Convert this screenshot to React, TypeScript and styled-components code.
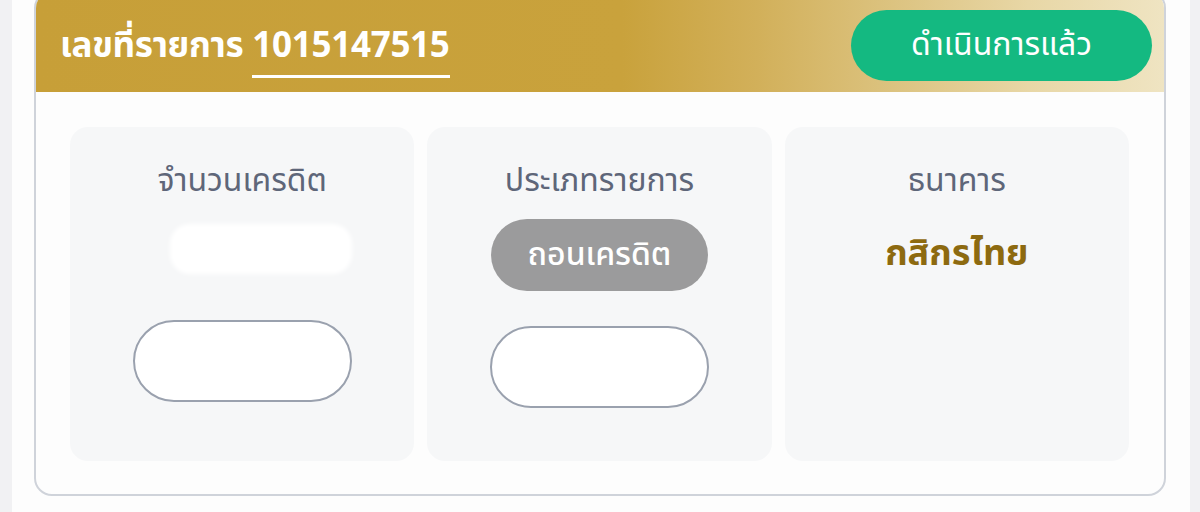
import styled, { createGlobalStyle } from 'styled-components';

const GlobalStyle = createGlobalStyle`
  html, body {
    margin: 0;
    padding: 0;
    background: #f1f1f3;
    font-family: 'Noto Sans Thai', 'Noto Sans', 'Liberation Sans', sans-serif;
  }
`;

const Page = styled.div`
  width: 1200px;
  height: 512px;
  overflow: hidden;
  display: flex;
`;

const Sheet = styled.div`
  margin-left: 12px;
  width: 1178px;
  height: 100%;
  background: #fdfdfd;
  padding: 0 24px 0 22px;
  box-sizing: border-box;
`;

const Card = styled.div`
  margin-top: -10px;
  border: 2px solid #cfd3da;
  border-radius: 18px;
  overflow: hidden;
  background: #fdfdfd;
`;

const Header = styled.div`
  height: 94px;
  padding: 6px 12px 0 24px;
  display: flex;
  align-items: center;
  justify-content: space-between;
  background: linear-gradient(
    90deg,
    #c79f38 0%,
    #c9a23c 52%,
    #d2b05a 64%,
    #dcc380 76%,
    #e8d7a6 88%,
    #efe4c2 100%
  );
`;

const Title = styled.h1`
  margin: 0;
  padding-top: 8px;
  color: #fff;
  font-size: 35px;
  font-weight: 700;
  letter-spacing: -0.3px;
  display: flex;
  align-items: flex-start;
  gap: 9px;
`;

const OrderNo = styled.span`
  padding-bottom: 2px;
  border-bottom: 3px solid #fff;
`;

const StatusPill = styled.div`
  width: 301px;
  height: 71px;
  border-radius: 36px;
  background: #14b981;
  color: #fff;
  font-size: 32px;
  display: flex;
  align-items: center;
  justify-content: center;
`;

const Body = styled.div`
  padding: 35px 35px 33px 34px;
  display: grid;
  grid-template-columns: repeat(3, 1fr);
  gap: 13px;
`;

const Panel = styled.div`
  height: 334px;
  border-radius: 18px;
  background: #f6f7f8;
  display: flex;
  flex-direction: column;
  align-items: center;
  padding-top: 34px;
  box-sizing: border-box;
`;

const Label = styled.div`
  color: #5e6679;
  font-size: 32px;
  line-height: 40px;
`;

const Blur = styled.div<{ $w: number; $h: number; $mt: number; $dx: number }>`
  width: ${(p) => p.$w}px;
  height: ${(p) => p.$h}px;
  margin-top: ${(p) => p.$mt}px;
  margin-left: ${(p) => p.$dx}px;
  background: #fff;
  border-radius: 20px;
  filter: blur(2px);
`;

const TypeTag = styled.div`
  margin-top: 18px;
  width: 217px;
  height: 72px;
  border-radius: 36px;
  background: #9b9b9c;
  color: #fff;
  font-size: 32px;
  font-weight: 500;
  display: flex;
  align-items: center;
  justify-content: center;
`;

const OutlinePill = styled.div<{ $mt: number }>`
  margin-top: ${(p) => p.$mt}px;
  width: 219px;
  height: 82px;
  border-radius: 41px;
  border: 2px solid #9aa1ae;
  background: #fff;
  box-sizing: border-box;
`;

const Bank = styled.div`
  margin-top: 26px;
  color: #8d6a10;
  font-size: 36px;
  font-weight: 700;
`;

export default function App() {
  return (
    <Page>
      <GlobalStyle />
      <Sheet>
        <Card>
          <Header>
            <Title>
              <span>เลขที่รายการ</span>
              <OrderNo>1015147515</OrderNo>
            </Title>
            <StatusPill>ดำเนินการแล้ว</StatusPill>
          </Header>
          <Body>
            <Panel>
              <Label>จำนวนเครดิต</Label>
              <Blur $w={182} $h={50} $mt={23} $dx={38} />
              <OutlinePill $mt={46} />
            </Panel>
            <Panel>
              <Label>ประเภทรายการ</Label>
              <TypeTag>ถอนเครดิต</TypeTag>
              <OutlinePill $mt={35} />
            </Panel>
            <Panel>
              <Label>ธนาคาร</Label>
              <Bank>กสิกรไทย</Bank>
            </Panel>
          </Body>
        </Card>
      </Sheet>
    </Page>
  );
}
